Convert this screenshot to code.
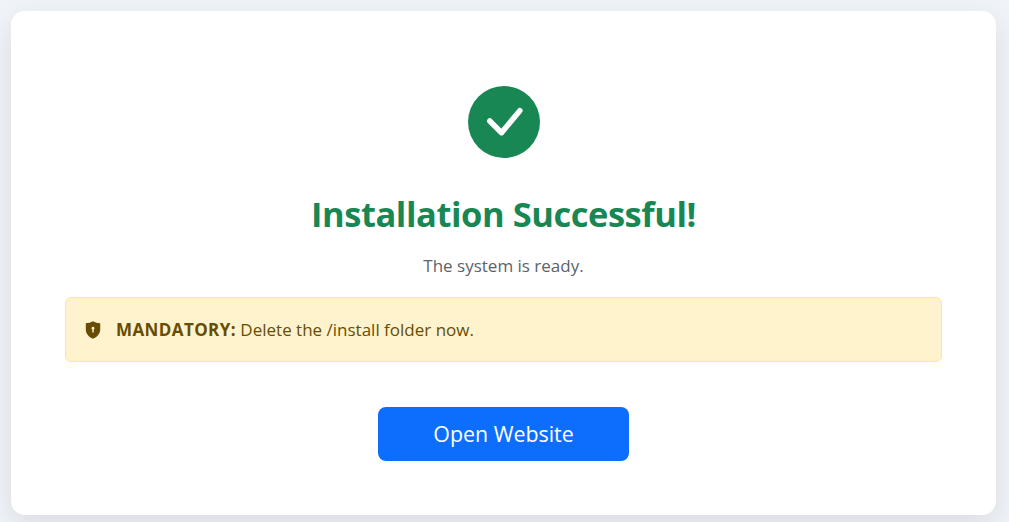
<style>
  :global(body) {
    margin: 0;
    background: #f0f4f8;
    font-family: "Open Sans", "Noto Sans", sans-serif;
  }
  .page {
    height: 522px;
    box-sizing: border-box;
    padding: 11px 13px 7px 11px;
    overflow: hidden;
  }
  .card {
    height: 504px;
    box-sizing: border-box;
    background: #fff;
    border-radius: 14px;
    box-shadow: 0 10px 30px rgba(0, 0, 0, 0.1);
    padding: 75px 54px 0;
    display: flex;
    flex-direction: column;
    align-items: center;
  }
  .tick {
    width: 72px;
    height: 72px;
    display: block;
  }
  h1 {
    margin: 32px 0 0;
    font-size: 34.5px;
    line-height: 48px;
    letter-spacing: -0.45px;
    font-weight: 700;
    color: #198754;
  }
  .lead {
    margin: 16px 0 0;
    font-size: 17px;
    line-height: 24px;
    color: #5c636a;
  }
  .alert {
    align-self: stretch;
    margin-top: 19px;
    height: 65px;
    box-sizing: border-box;
    display: flex;
    align-items: center;
    gap: 14px;
    padding: 0 18px;
    background: #fff3cd;
    border: 1px solid #ffe69c;
    border-radius: 6px;
    color: #664d03;
    font-size: 17px;
  }
  .alert strong {
    letter-spacing: 0.4px;
  }
  .alert svg {
    width: 18px;
    height: 18px;
    flex: none;
  }
  .btn {
    margin-top: 45px;
    width: 251px;
    height: 54px;
    box-sizing: border-box;
    padding-bottom: 2px;
    display: flex;
    align-items: center;
    justify-content: center;
    background: #0d6efd;
    color: #fff;
    border-radius: 8px;
    font-size: 21.4px;
    text-decoration: none;
  }
</style>

<div class="page">
  <main class="card">
    <svg class="tick" viewBox="0 0 72 72" aria-hidden="true">
      <circle cx="36" cy="36" r="36" fill="#198754" />
      <path d="M21.800 35l11.700 11.700 18.300-22" fill="none" stroke="#fff" stroke-width="5.500" stroke-linecap="round" stroke-linejoin="round" />
    </svg>
    <h1>Installation Successful!</h1>
    <p class="lead">The system is ready.</p>
    <div class="alert">
      <svg viewBox="0 0 18 18" aria-hidden="true">
        <path fill-rule="evenodd" fill="#664d03" d="M9 0.200c2.200 1.200 4.600 1.900 7.200 2v6.300c0 4.200-3 7.600-7.200 9.300-4.200-1.700-7.200-5.100-7.200-9.300V2.200c2.600-.1 5-.8 7.200-2zM9 5.800a1.500 1.500 0 0 0-.7 2.800V11.500h1.400V8.600A1.500 1.500 0 0 0 9 5.800z" />
      </svg>
      <span><strong>MANDATORY:</strong> Delete the /install folder now.</span>
    </div>
    <a class="btn" href="#open">Open Website</a>
  </main>
</div>
